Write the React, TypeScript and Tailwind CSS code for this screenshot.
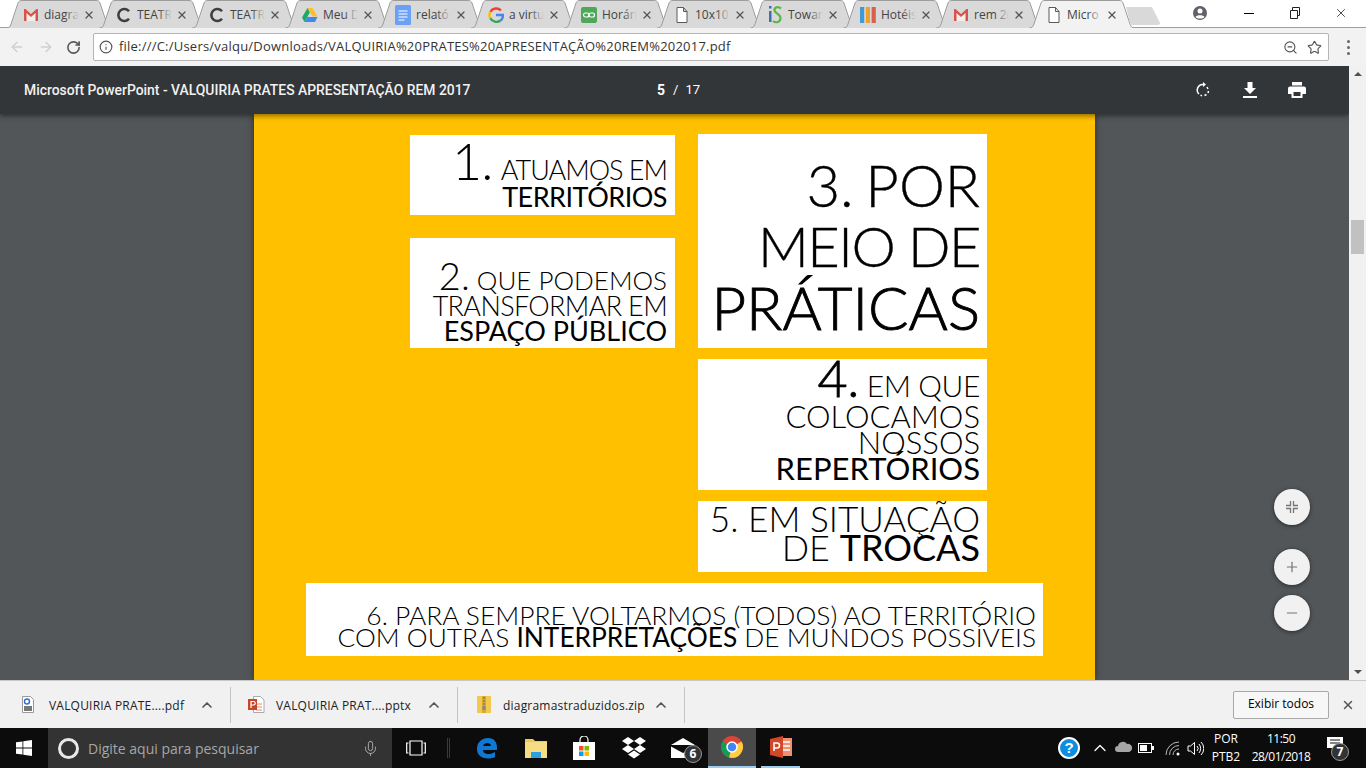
import React from 'react';
import { ArrowLeft, ArrowRight, ChevronUp, Info, Mic, RotateCw, Star, X, ZoomOut, Plus, Minus } from 'lucide-react';

const Gmail = () => (
  <svg width="16" height="14" viewBox="0 0 16 14">
    <path d="M1 13V1l7 5.500L15 1v12z" fill="#f1eeee" />
    <path d="M1 13V1h1.500L8 6l5.500-5H15v12h-2.500V5L8 9 3.500 5v8z" fill="#d9534a" />
  </svg>
);
const Copy = () => (
  <svg width="16" height="16" viewBox="0 0 16 16"><path d="M13 4.200A6 6 0 1 0 13 11.800" fill="none" stroke="#3c3f42" strokeWidth="2.600" /></svg>
);
const Drive = () => (
  <svg width="16" height="14" viewBox="0 0 16 14">
    <path d="M5.500 0h5l5 8.500h-5z" fill="#fbc02d" />
    <path d="M5.500 0L0 9.500 2.500 14l5.300-9.500z" fill="#1faa62" />
    <path d="M2.500 14h10.500l2.500-5H5.300z" fill="#4285f4" />
  </svg>
);
const Docs = () => (
  <svg width="16" height="20" viewBox="0 0 16 20">
    <rect width="16" height="20" rx="1.500" fill="#6aa0f5" />
    <path d="M3.500 6h9M3.500 9h9M3.500 12h9M3.500 15h6" stroke="#fff" strokeWidth="1.200" />
  </svg>
);
const Google = () => (
  <svg width="16" height="16" viewBox="0 0 16 16">
    <path d="M13 3.300A7 7 0 0 0 2.300 4.800" fill="none" stroke="#ea4335" strokeWidth="2.400" />
    <path d="M2.300 4.800a7 7 0 0 0 0 6.400" fill="none" stroke="#fbbc05" strokeWidth="2.400" />
    <path d="M2.300 11.200a7 7 0 0 0 10.200 2.400" fill="none" stroke="#34a853" strokeWidth="2.400" />
    <path d="M12.500 13.600A7 7 0 0 0 15 8H8" fill="none" stroke="#4285f4" strokeWidth="2.400" />
  </svg>
);
const Horario = () => (
  <svg width="16" height="16" viewBox="0 0 16 16">
    <rect width="16" height="16" rx="2" fill="#4fa85a" />
    <rect x="2.500" y="6" width="5.500" height="4" rx="2" fill="none" stroke="#fff" strokeWidth="1.200" />
    <rect x="8" y="6" width="5.500" height="4" rx="2" fill="none" stroke="#fff" strokeWidth="1.200" />
  </svg>
);
const PageIcon = () => (
  <svg width="12" height="16" viewBox="0 0 12 16"><path d="M1 .5h6.500L11 4.500v11H1zM7.500.5v4H11" fill="#fff" stroke="#5a5a5a" /></svg>
);
const IS = () => (
  <svg width="14" height="20" viewBox="0 0 14 20">
    <rect x="1" y="1" width="2.500" height="2.500" fill="#3a6fb0" />
    <rect x="1" y="6" width="2.500" height="11" fill="#3a6fb0" />
    <path d="M13 3.500C9 .5 6 3 6.500 5.500 7 8.500 12.500 9 12.500 13c0 4-4.500 5.500-7.500 3" fill="none" stroke="#5cb544" strokeWidth="2.200" />
  </svg>
);
const Bars = () => (
  <svg width="16" height="16" viewBox="0 0 16 16">
    <rect width="4.200" height="16" fill="#3c9ad6" />
    <rect x="5.800" width="4.200" height="16" fill="#f0a030" />
    <rect x="11.600" width="4.200" height="16" fill="#d9604a" />
  </svg>
);

const tabs = [
  { label: 'diagra', icon: <Gmail /> },
  { label: 'TEATR', icon: <Copy /> },
  { label: 'TEATR', icon: <Copy /> },
  { label: 'Meu D', icon: <Drive /> },
  { label: 'relató', icon: <Docs /> },
  { label: 'a virtu', icon: <Google /> },
  { label: 'Horári', icon: <Horario /> },
  { label: '10x10', icon: <PageIcon /> },
  { label: 'Towar', icon: <IS /> },
  { label: 'Hotéis', icon: <Bars /> },
  { label: 'rem 2(', icon: <Gmail /> },
];

const Tab = ({ label, icon, active }: { label: string; icon: React.ReactNode; active?: boolean }) => (
  <div className="relative w-[106px] h-[28px] -mr-[13px] shrink-0 flex items-center pl-[17px] pt-[2px]">
    <svg className="absolute inset-0" width="106" height="28" viewBox="0 0 106 28">
      <path
        d="M0 28C3 28 4 27 5 24L12 3C13 1 14 .5 16 .5H90C92 .5 93 1 94 3L101 24C102 27 103 28 106 28"
        fill={active ? '#f2f2f2' : '#d9d9d9'}
        stroke="#9d9d9d"
      />
    </svg>
    <div className="relative w-[16px] flex justify-center shrink-0">{icon}</div>
    <div className="relative ml-[5px] w-[35px] overflow-hidden whitespace-nowrap text-[12px] text-[#444] font-['Open_Sans',sans-serif]">
      {label}
      <div className={`absolute inset-y-0 right-0 w-[14px] bg-gradient-to-r from-transparent ${active ? 'to-[#f2f2f2]' : 'to-[#d9d9d9]'}`} />
    </div>
    <X className="relative ml-[4px] shrink-0 text-[#555]" size={12} strokeWidth={2.500} />
  </div>
);

const Box = ({ className, children }: { className: string; children: React.ReactNode }) => (
  <div className={`bg-white text-right text-black font-['Lato',sans-serif] font-light ${className}`}>{children}</div>
);

const Slide = () => (
  <div className="w-[841px] h-[566px] bg-[#ffc000] shadow-[0_0_6px_rgba(0,0,0,0.5)] flex flex-col pt-[20px]">
    <div className="flex ml-[156px] gap-[23px]">
      <div className="w-[265px] flex flex-col gap-[23px] pt-[1px]">
        <Box className="h-[80px] pt-[2px] pr-[8px] whitespace-nowrap">
          <div className="text-[27px] leading-[30px] tracking-[-1px] pt-[2px]">
            <span className="text-[52px] leading-[42px] mr-[3px]">1.</span> ATUAMOS EM
          </div>
          <div className="text-[27px] leading-[24px] font-normal tracking-[-0.5px]">TERRITÓRIOS</div>
        </Box>
        <Box className="h-[110px] pt-[25px] pr-[8px] whitespace-nowrap">
          <div className="text-[26px] leading-[25px]">
            <span className="text-[38px] leading-[25px]">2.</span> QUE PODEMOS
          </div>
          <div className="text-[27px] leading-[25px] tracking-[-0.65px]">TRANSFORMAR EM</div>
          <div className="text-[27px] leading-[25px] font-normal">ESPAÇO PÚBLICO</div>
        </Box>
      </div>
      <Box className="w-[289px] h-[214px] pt-[20px] pr-[7px] whitespace-nowrap">
        <div className="text-[58px] leading-[62px] [word-spacing:-4px] [-webkit-text-stroke:0.4px_black]">3. POR</div>
        <div className="text-[56px] leading-[60px] tracking-[-1.5px] [-webkit-text-stroke:0.4px_black]">MEIO DE</div>
        <div className="text-[60px] leading-[62px] [-webkit-text-stroke:0.9px_black]">PRÁTICAS</div>
      </Box>
    </div>
    <div className="w-[289px] ml-[444px] mt-[11px] flex flex-col gap-[11px]">
      <Box className="h-[131px] whitespace-nowrap pt-[3px] pr-[7px]">
        <div className="text-[30px] leading-[30px] tracking-[-0.4px]">
          <span className="text-[52px] leading-[30px] [-webkit-text-stroke:0.8px_black]">4.</span> EM QUE
        </div>
        <div className="text-[31px] leading-[26px] mt-[3px]">COLOCAMOS</div>
        <div className="text-[31px] leading-[26px]">NOSSOS</div>
        <div className="text-[31px] leading-[26px] font-normal">REPERTÓRIOS</div>
      </Box>
      <Box className="h-[71px] whitespace-nowrap pt-[3px] pr-[7px]">
        <div className="text-[35.2px] leading-[29px]">5. EM SITUAÇÃO</div>
        <div className="text-[36px] leading-[28px]">
          DE <span className="font-normal">TROCAS</span>
        </div>
      </Box>
    </div>
    <div className="ml-[52px] mt-[11px] w-[737px]">
      <Box className="h-[73px] pt-[21px] pr-[7px] whitespace-nowrap">
        <div className="text-[26.4px] leading-[22px]">6. PARA SEMPRE VOLTARMOS (TODOS) AO TERRITÓRIO</div>
        <div className="text-[26.3px] leading-[22px]">
          COM OUTRAS <span className="font-normal">INTERPRETAÇÕES</span> DE MUNDOS POSSÍVEIS
        </div>
      </Box>
    </div>
  </div>
);

const FileIcon = ({ kind }: { kind: 'pdf' | 'ppt' | 'zip' }) => {
  if (kind === 'pdf')
    return (
      <svg width="12" height="17" viewBox="0 0 12 17">
        <path d="M.5.5h8l3 3v13H.5z" fill="#fff" stroke="#9a9a9a" />
        <circle cx="5" cy="5.500" r="2.500" fill="none" stroke="#2a6fd0" strokeWidth="1.400" />
        <rect x="2" y="10" width="8" height="5" fill="#777" />
      </svg>
    );
  if (kind === 'ppt')
    return (
      <svg width="17" height="17" viewBox="0 0 17 17">
        <path d="M5.500.5h7l3.500 3.500v12.500H5.500z" fill="#fff" stroke="#aaa" />
        <path d="M8 8h6M8 11h6M8 14h6" stroke="#e48a6a" />
        <rect y="3" width="9" height="11" fill="#c8452a" />
        <path d="M3 12V5.500h2.500a1.500 1.500 0 0 1 0 3.500H3" fill="none" stroke="#fff" strokeWidth="1.200" />
      </svg>
    );
  return (
    <svg width="14" height="17" viewBox="0 0 14 17">
      <rect width="14" height="17" fill="#f2c94f" />
      <rect x="5" width="4" height="17" fill="#d9a92e" />
      <path d="M6 2h2M6 5h2M6 8h2" stroke="#666" />
      <rect x="5.500" y="10" width="3" height="4" fill="#888" />
    </svg>
  );
};

const DownloadItem = ({ kind, name, width, pad, gap }: { kind: 'pdf' | 'ppt' | 'zip'; name: string; width: number; pad: string; gap: string }) => (
  <div className={`h-[36px] flex items-center border-r border-[#c4c4c4] ${pad}`} style={{ width }}>
    <FileIcon kind={kind} />
    <span className={`flex-1 pt-[2px] text-[12px] tracking-[0.2px] text-[#222] whitespace-nowrap font-['Open_Sans',sans-serif] ${gap}`}>{name}</span>
    <ChevronUp className="mr-[15px] text-[#555]" size={16} strokeWidth={2.500} />
  </div>
);

const RoundButton = ({ children, className }: { children: React.ReactNode; className?: string }) => (
  <div className={`w-[36px] h-[36px] rounded-full bg-[#f1f1f1] shadow-[0_1px_4px_rgba(0,0,0,0.5)] flex items-center justify-center text-[#757575] ${className ?? ''}`}>
    {children}
  </div>
);

const Tray = () => (
  <div className="flex items-center h-full">
    <div className="w-[22px] h-[22px] rounded-full bg-[#0c8ee0] border-2 border-white flex items-center justify-center text-white text-[15px] font-bold font-['Liberation_Sans',sans-serif]">?</div>
    <ChevronUp className="ml-[10px] text-white" size={20} strokeWidth={1.500} />
    <svg className="ml-[5px] mb-[4px]" width="17" height="11" viewBox="0 0 17 11"><path d="M3 11a3 3 0 0 1 0-6 5 5 0 0 1 9-2 4 4 0 0 1 2 8z" fill="#a5a5a5" /></svg>
    <svg className="ml-[6px]" width="16" height="10" viewBox="0 0 16 10">
      <rect x=".5" y=".5" width="13" height="9" fill="none" stroke="#fff" />
      <rect x="2" y="2" width="7" height="6" fill="#fff" />
      <rect x="14" y="3" width="2" height="4" fill="#fff" />
    </svg>
    <svg className="ml-[11px]" width="16" height="15" viewBox="0 0 16 15" fill="none" stroke="#b5b5b5">
      <path d="M1 14A13 13 0 0 1 14 1M4.500 14A9.500 9.500 0 0 1 14 4.500M8 14A6 6 0 0 1 14 8" />
      <circle cx="13" cy="13" r="1.500" fill="#fff" stroke="none" />
    </svg>
    <svg className="ml-[6px]" width="17" height="17" viewBox="0 0 17 17" fill="none" stroke="#fff">
      <path d="M1 6v5h2.500L7.500 14.500v-12L3.500 6z" />
      <path d="M10 6a3.500 3.500 0 0 1 0 5M12 4a7 7 0 0 1 0 9M14 2a9 9 0 0 1 0 13" />
    </svg>
    <div className="ml-[4px] w-[36px] text-center text-white text-[12px] leading-[18px] font-['Open_Sans',sans-serif]">
      <div>POR</div>
      <div>PTB2</div>
    </div>
    <div className="ml-[4px] w-[66px] text-center text-white text-[12px] leading-[18px] tracking-[-0.5px] font-['Open_Sans',sans-serif]">
      <div>11:50</div>
      <div>28/01/2018</div>
    </div>
    <div className="relative ml-[13px] w-[20px] h-[20px]">
      <svg width="16" height="14" viewBox="0 0 16 14" className="-mt-[1px]">
        <path d="M0 0h16v11H8l-3 3v-3H0z" fill="#fff" />
        <path d="M3 3h10M3 6h10" stroke="#111" />
      </svg>
      <div className="absolute -right-[2px] top-[5px] w-[18px] h-[18px] rounded-full bg-[#333] border border-[#999] text-white text-[12px] font-bold leading-[16px] text-center">7</div>
    </div>
  </div>
);

export default function App() {
  return (
    <div className="w-[1366px] h-[768px] overflow-hidden flex flex-col bg-[#f1f1f1]">
      {/* tab strip */}
      <div className="h-[28px] shrink-0 flex bg-white pl-[6px] relative">
        <div className="absolute bottom-0 inset-x-0 h-px bg-[#9d9d9d]" />
        {tabs.map((t, i) => (
          <Tab key={i} label={t.label} icon={t.icon} />
        ))}
        <Tab label="Micro" icon={<PageIcon />} active />
        <svg className="relative ml-[3px] mt-[7px]" width="36" height="18" viewBox="0 0 36 18">
          <path d="M1 0H27L35 16C35 17 34 18 33 18H7C6 18 5 17 5 16z" fill="#d9d9d9" />
        </svg>
        <div className="flex-1 flex items-start justify-end relative pt-[6px]">
          <svg className="mr-[37px]" width="14" height="14" viewBox="0 0 14 14">
            <circle cx="7" cy="7" r="7" fill="#5f6368" />
            <circle cx="7" cy="5" r="2.500" fill="#fff" />
            <path d="M2.500 11c1-2.500 8-2.500 9 0-2 2-7 2-9 0z" fill="#fff" />
          </svg>
          <div className="w-[10px] h-px bg-black mt-[7px] mr-[36px]" />
          <svg className="mr-[34px] mt-px" width="10" height="12" viewBox="0 0 10 12" fill="none" stroke="#222"><path d="M.5 3.500h7v8h-7zM2.500 3.500v-3h7v8h-2" /></svg>
          <X className="mr-[18px]" size={14} strokeWidth={1.200} />
        </div>
      </div>

      {/* address bar */}
      <div className="h-[38px] shrink-0 flex items-center bg-[#f2f2f2] pl-[9px]">
        <ArrowLeft className="text-[#cfcfcf]" size={16} strokeWidth={2} />
        <ArrowRight className="ml-[13px] text-[#cfcfcf]" size={16} strokeWidth={2} />
        <RotateCw className="ml-[12px] text-[#555]" size={15} strokeWidth={2.500} />
        <div className="ml-[12px] flex-1 h-[28px] bg-white rounded-[2px] border border-[#b5b5b5] flex items-center pl-[5px] pr-[6px]">
          <Info className="text-[#555]" size={14} strokeWidth={2} />
          <span className="ml-[6px] flex-1 text-[13px] tracking-[0.22px] text-[#333] whitespace-nowrap font-['Open_Sans',sans-serif]">
            file:///C:/Users/valqu/Downloads/VALQUIRIA%20PRATES%20APRESENTAÇÃO%20REM%202017.pdf
          </span>
          <ZoomOut className="text-[#555]" size={15} strokeWidth={1.800} />
          <Star className="ml-[9px] text-[#555]" size={15} strokeWidth={1.800} />
        </div>
        <div className="ml-[18px] mr-[16px] flex flex-col gap-[3px]">
          <div className="w-[3px] h-[3px] bg-[#666] rounded-full" />
          <div className="w-[3px] h-[3px] bg-[#666] rounded-full" />
          <div className="w-[3px] h-[3px] bg-[#666] rounded-full" />
        </div>
      </div>

      {/* pdf viewer */}
      <div className="h-[614px] shrink-0 flex">
        <div className="relative w-[1349px] bg-[#525659] flex flex-col items-center overflow-hidden">
          <div className="h-[48px] w-full shrink-0 bg-[#323639] shadow-[0_2px_5px_rgba(0,0,0,0.45)] z-10 flex items-center pl-[24px] pr-[43px] text-white font-['Roboto',sans-serif]">
            <span className="w-[633px] text-[13.9px] font-medium text-[#f1f1f1] whitespace-nowrap">Microsoft PowerPoint - VALQUIRIA PRATES APRESENTAÇÃO REM 2017</span>
            <span className="text-[14px] font-bold">5</span>
            <span className="ml-[8px] text-[13px]">/</span>
            <span className="ml-[7px] text-[13px]">17</span>
            <div className="flex-1 flex items-center justify-end gap-[31px]">
              <svg width="18" height="18" viewBox="0 0 18 18" fill="none" stroke="#fff" strokeWidth="1.500">
                <path d="M9 3.500A5.500 5.500 0 0 0 5 13" />
                <path d="M9 1v5l3-2.500z" fill="#fff" stroke="none" />
                <path d="M13 6l1 2M14.500 10l-.5 2M12.500 13.500l-2 1M8 14.700l-1.500-.5" />
              </svg>
              <svg width="14" height="16" viewBox="0 0 14 16" fill="#fff"><path d="M4.500 0h5v6H13L7 12 1 6h3.500zM0 14h14v2H0z" /></svg>
              <svg width="18" height="16" viewBox="0 0 18 16" fill="#fff"><path d="M4 0h10v3.500H4zM2 4.500h14a2 2 0 0 1 2 2V12h-3.500v4h-11v-4H0V6.500a2 2 0 0 1 2-2zM5.500 10v4h7v-4z" /></svg>
            </div>
          </div>
          <Slide />
          <div className="absolute right-[39px] bottom-[49px] flex flex-col">
            <RoundButton>
              <svg width="12" height="12" viewBox="0 0 12 12" fill="none" stroke="currentColor" strokeWidth="1.300"><path d="M4.500 0v4.500H0M7.500 0v4.500H12M4.500 12V7.500H0M7.500 12V7.500H12" /></svg>
            </RoundButton>
            <RoundButton className="mt-[24px]"><Plus size={16} strokeWidth={1.800} /></RoundButton>
            <RoundButton className="mt-[10px]"><Minus size={16} strokeWidth={1.800} /></RoundButton>
          </div>
        </div>
        <div className="w-[17px] flex flex-col items-center bg-[#f1f1f1] pt-[6px] pb-[6px]">
          <div className="w-0 h-0 border-x-[4px] border-x-transparent border-b-[4px] border-b-[#505050]" />
          <div className="w-[13px] h-[34px] mt-[144px] bg-[#c1c1c1]" />
          <div className="mt-auto w-0 h-0 border-x-[4px] border-x-transparent border-t-[4px] border-t-[#505050]" />
        </div>
      </div>

      {/* downloads bar */}
      <div className="h-[48px] shrink-0 flex items-center bg-[#f1f1f1] border-t border-[#c8c8c8]">
        <DownloadItem kind="pdf" name="VALQUIRIA PRATE....pdf" width={231} pad="pl-[22px]" gap="ml-[15px]" />
        <DownloadItem kind="ppt" name="VALQUIRIA PRAT....pptx" width={227} pad="pl-[17px]" gap="ml-[11px]" />
        <DownloadItem kind="zip" name="diagramastraduzidos.zip" width={227} pad="pl-[19px]" gap="ml-[12px]" />
        <div className="ml-auto w-[96px] h-[28px] bg-[#f7f7f7] rounded-[2px] border border-[#a8a8a8] flex items-center justify-center pb-[2px] text-[12px] text-black font-['Open_Sans',sans-serif]">Exibir todos</div>
        <X className="ml-[12px] mr-[11px] text-[#555]" size={14} strokeWidth={2.500} />
      </div>

      {/* taskbar */}
      <div className="h-[40px] shrink-0 flex items-center bg-[#0c0c0c]">
        <div className="w-[48px] h-full flex items-center justify-center">
          <svg width="16" height="16" viewBox="0 0 16 16" fill="#fff"><path d="M0 2.300l6.500-.9v6.200H0zM7.300 1.300L16 0v7.600H7.300zM0 8.400h6.500v6.200L0 13.700zM7.300 8.400H16V16l-8.700-1.300z" /></svg>
        </div>
        <div className="w-[344px] h-full bg-[#333333] flex items-center pl-[10px] pr-[13px]">
          <div className="w-[21px] h-[21px] rounded-full border-[3px] border-[#e8e8e8]" />
          <span className="ml-[9px] flex-1 text-[14px] text-[#a6a6a6] font-['Open_Sans',sans-serif]">Digite aqui para pesquisar</span>
          <Mic className="text-[#b0b0b0]" size={17} strokeWidth={1.300} />
        </div>
        <svg className="ml-[14px]" width="20" height="16" viewBox="0 0 20 16" fill="none" stroke="#fff" strokeWidth="1.200"><path d="M4 1h12v14H4zM2.500 3H.7v10h1.800M17.500 3h1.800v10h-1.800" /></svg>
        <div className="ml-[21px] w-[3px] h-[20px] border-x border-[#3a3a3a]" />
        <svg className="ml-[26px]" width="22" height="22" viewBox="0 0 22 22">
          <path d="M1 12C1 5 6 1 12 1c6 0 9 4 9 10v2H7c0 5 8 5 12 2v5c-6 3-18 2-18-8zm6-3h8c0-4-7-4-8 0z" fill="#0f78d4" />
        </svg>
        <svg className="ml-[27px]" width="22" height="20" viewBox="0 0 22 20">
          <path d="M0 1h8l2 2h12v4H0z" fill="#f2c94f" />
          <rect y="4" width="22" height="16" fill="#f6dc82" />
          <rect x="6" y="14" width="10" height="6" fill="#2f9ede" />
        </svg>
        <svg className="ml-[26px]" width="22" height="24" viewBox="0 0 22 24">
          <path d="M7 6V4a4 4 0 0 1 8 0v2" fill="none" stroke="#fff" strokeWidth="1.200" />
          <rect y="6" width="22" height="18" fill="#fff" />
          <rect x="6" y="10" width="4.500" height="4.500" fill="#f25022" />
          <rect x="11.500" y="10" width="4.500" height="4.500" fill="#7fba00" />
          <rect x="6" y="15.500" width="4.500" height="4.500" fill="#00a4ef" />
          <rect x="11.500" y="15.500" width="4.500" height="4.500" fill="#ffb900" />
        </svg>
        <svg className="ml-[27px]" width="24" height="23" viewBox="0 0 24 23" fill="#fff">
          <path d="M6 0l6 4-6 4-6-4zM18 0l6 4-6 4-6-4zM6 8l6 4-6 4-6-4zM18 8l6 4-6 4-6-4zM6 17.500l6-4 6 4-6 4z" />
        </svg>
        <div className="relative ml-[25px] w-[24px] h-[20px]">
          {/* open envelope */}
          <svg width="24" height="20" viewBox="0 0 24 20">
            <path d="M0 7L12 0l12 7z" fill="#fff" />
            <path d="M0 8.500L12 15 24 8.500V20H0z" fill="#fff" />
          </svg>
          <div className="absolute -right-[7px] top-[7px] w-[18px] h-[18px] rounded-full bg-[#333] border border-[#999] text-white text-[12px] font-bold leading-[16px] text-center">6</div>
        </div>
        <div className="ml-[13px] w-[48px] h-full bg-[#4a4a4a] border-b-[2px] border-b-[#9ccbf0] flex items-center justify-center">
          <svg width="22" height="22" viewBox="0 0 22 22">
            <circle cx="11" cy="11" r="11" fill="#db4437" />
            <path d="M11 11L1.500 5.500A11 11 0 0 0 8 21.500z" fill="#0f9d58" />
            <path d="M11 11l9.500-5.500A11 11 0 0 1 8 21.500z" fill="#ffcd40" />
            <circle cx="11" cy="11" r="5" fill="#4285f4" stroke="#fff" strokeWidth="1.500" />
          </svg>
        </div>
        <div className="ml-[5px] w-[39px] h-full border-b-[2px] border-b-[#9ccbf0] flex items-center justify-center">
          <svg width="22" height="22" viewBox="0 0 22 22">
            <rect x="9" y="2" width="13" height="18" fill="#f09070" />
            <path d="M13 6h7M13 10h7M13 14h7" stroke="#fff" strokeWidth="1.500" />
            <path d="M0 3l13-3v22L0 19z" fill="#d24726" />
            <path d="M4 15V7h3a2 2 0 0 1 0 5H4" fill="none" stroke="#fff" strokeWidth="1.500" />
          </svg>
        </div>
        <div className="ml-[258px]">
          <Tray />
        </div>
      </div>
    </div>
  );
}
